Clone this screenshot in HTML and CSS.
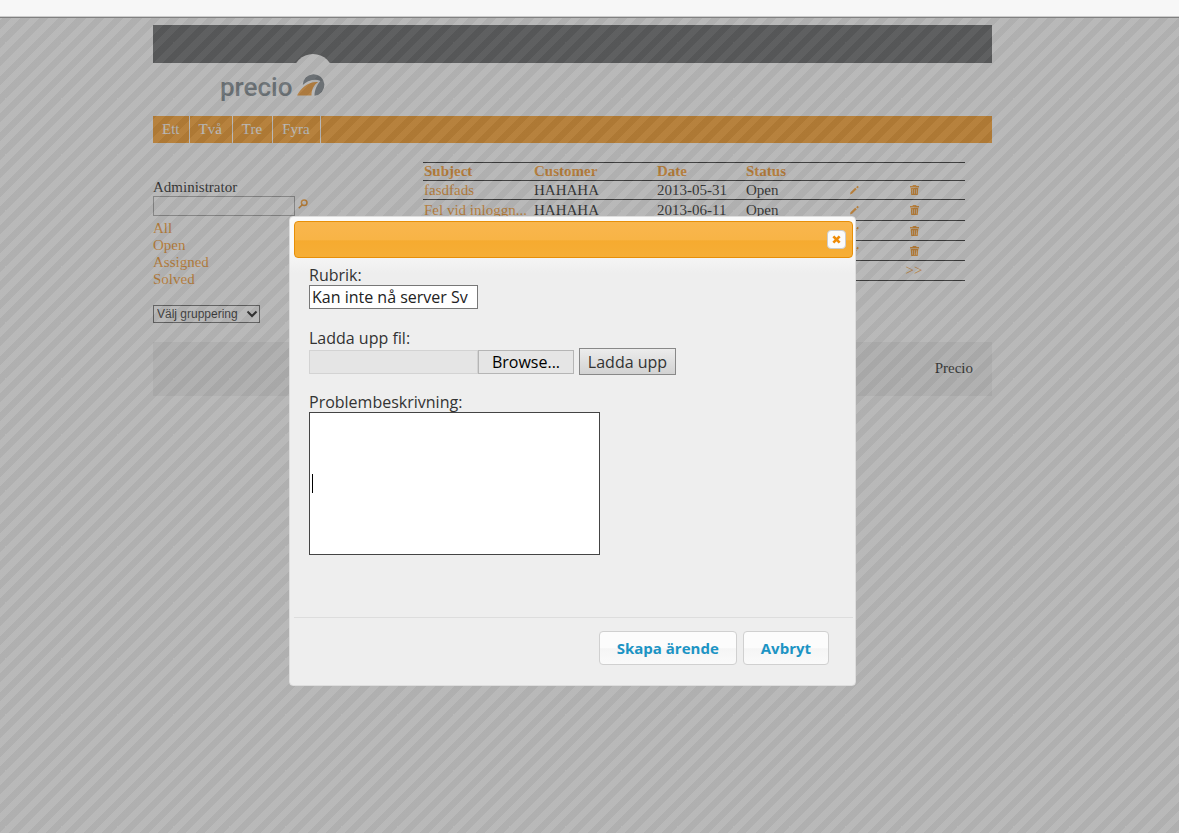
FILE: index.html
```html
<!DOCTYPE html>
<html lang="sv">
<head>
<meta charset="utf-8">
<title>Precio</title>
<link rel="stylesheet" href="styles.css">
</head>
<body>
<svg class="sprites" aria-hidden="true">
  <symbol id="pencil" viewBox="0 0 10 10"><path d="M0 10l.6-2.400 5.200-5 1.700 1.700-5.200 5zM6.800 1.900L8.400.3l1.500 1.500-1.600 1.600z"/></symbol>
  <symbol id="trash" viewBox="0 0 10 11"><path fill-rule="evenodd" d="M3 0h4v1h3v1.800H0V1h3zM.8 3.400h8.400L8.600 11H1.400zM2.700 4.600v5h.6v-5zM4.700 4.600v5h.6v-5zM6.700 4.600v5h.6v-5z"/></symbol>
</svg>
<div class="topbar"></div>
<div class="stage">
  <div class="page">
    <header class="header">
      <div class="band"></div>
      <svg class="logo" viewBox="0 0 120 62" role="img" aria-label="precio">
        <circle class="logo-bump" cx="97" cy="20" r="20"/>
        <text class="logo-text" x="4" y="42">precio</text>
        <path class="logo-disc" d="M86.800 31A10.800 10.800 0 1 1 98.500 41.700C98.500 36 101 30.500 104.500 27C98 24 91 27 86.800 31z"/>
        <path class="logo-sail" d="M81 41.500C85 34 92 27 102.300 28C97.500 31 95.500 36 95.500 41.500z"/>
      </svg>
    </header>
    <nav class="nav">
      <a href="#">Ett</a><a href="#">Två</a><a href="#">Tre</a><a href="#">Fyra</a>
    </nav>
    <main class="main">
      <aside class="side">
        <label for="search">Administrator</label>
        <div class="search">
          <input id="search" type="text">
          <button type="button" aria-label="Sök"><svg viewBox="0 0 10 10"><circle cx="6.200" cy="3.800" r="2.800"/><path d="M4 6L.8 9.200"/></svg></button>
        </div>
        <ul class="filters">
          <li><a href="#">All</a></li>
          <li><a href="#">Open</a></li>
          <li><a href="#">Assigned</a></li>
          <li><a href="#">Solved</a></li>
        </ul>
        <div class="group">
          <select aria-label="Gruppering"><option>Välj gruppering</option></select>
          <svg viewBox="0 0 12 8"><path d="M1.500 1.500L6 6l4.500-4.500"/></svg>
        </div>
      </aside>
      <table class="cases">
        <colgroup><col class="c1"><col class="c2"><col class="c3"><col class="c4"><col class="c5"><col class="c6"></colgroup>
        <thead>
          <tr><th>Subject</th><th>Customer</th><th>Date</th><th>Status</th><th></th><th></th></tr>
        </thead>
        <tbody>
          <tr><td><a href="#">fasdfads</a></td><td>HAHAHA</td><td>2013-05-31</td><td>Open</td><td class="act"><svg><use href="#pencil"/></svg></td><td class="act last"><svg><use href="#trash"/></svg></td></tr>
          <tr><td><a href="#">Fel vid inloggn...</a></td><td>HAHAHA</td><td>2013-06-11</td><td>Open</td><td class="act"><svg><use href="#pencil"/></svg></td><td class="act last"><svg><use href="#trash"/></svg></td></tr>
          <tr><td></td><td></td><td></td><td></td><td class="act"><svg><use href="#pencil"/></svg></td><td class="act last"><svg><use href="#trash"/></svg></td></tr>
          <tr><td></td><td></td><td></td><td></td><td class="act"><svg><use href="#pencil"/></svg></td><td class="act last"><svg><use href="#trash"/></svg></td></tr>
          <tr><td></td><td></td><td></td><td></td><td></td><td class="act last"><a href="#">&gt;&gt;</a></td></tr>
        </tbody>
      </table>
    </main>
    <footer class="footer">Precio</footer>
  </div>
  <div class="overlay">
    <form class="dialog" role="dialog" aria-label="Skapa ärende">
      <div class="titlebar">
        <button class="close" type="button" aria-label="Stäng"><svg viewBox="0 0 10 10"><path d="M1.500 1.500l7 7M8.500 1.500l-7 7"/></svg></button>
      </div>
      <div class="fields">
        <div class="field">
          <label for="subject">Rubrik:</label>
          <input class="text" id="subject" type="text" value="Kan inte nå server Sv">
        </div>
        <div class="field upload">
          <label for="file">Ladda upp fil:</label>
          <div class="file-row">
            <input class="file-name" id="file" type="text" readonly>
            <button class="browse" type="button">Browse...</button>
            <button class="send" type="button">Ladda upp</button>
          </div>
        </div>
        <div class="field">
          <label for="problem">Problembeskrivning:</label>
          <div class="area"><textarea id="problem"></textarea><span class="caret"></span></div>
        </div>
      </div>
      <div class="buttons">
        <button type="button">Skapa ärende</button>
        <button type="button">Avbryt</button>
      </div>
    </form>
  </div>
</div>
</body>
</html>
```
FILE: styles.css
```css
* { box-sizing: border-box; }
body {
  margin: 0;
  background: #fff;
  color: #000;
  font: 15px/17px "Liberation Serif", "Times New Roman", serif;
}
a { color: #f68b08; text-decoration: none; }
button, input, select, textarea { margin: 0; font: inherit; border-radius: 0; }
.sprites { position: absolute; width: 0; height: 0; }
.topbar {
  height: 18px;
  background: #f7f7f7;
  border-bottom: 1px solid #808080;
  box-shadow: inset 0 -1px #ccc;
}
.stage { position: relative; min-height: calc(100vh - 18px); padding: 7px 34px 0 0; }
.page { max-width: 839px; margin: 0 auto; }

.header { height: 91px; }
.band { height: 38px; background: #4b4c4e; }
.logo { display: block; width: 120px; height: 62px; margin: -9px 0 0 63px; }
.logo-bump { fill: #fff; }
.logo-text { font: 500 26px Roboto, sans-serif; fill: #6c7981; }
.logo-disc { fill: #656f77; }
.logo-sail { fill: #f6931d; }

.nav { display: flex; height: 27px; background: #fa9108; }
.nav a { padding: 5px 10px 5px 9px; color: #fff; border-right: 1px solid #fff; }
.nav a:first-child { padding-right: 9px; }

.main { display: flex; justify-content: space-between; padding: 19px 27px 0 0; height: 199px; }
.side { width: 170px; padding-top: 17px; }
.side label { display: block; }
.search { display: flex; gap: 3px; align-items: flex-start; margin-bottom: 4px; }
.search input { width: 142px; height: 20px; padding: 0 2px; border: 1px solid #999; background: transparent; }
.search button { padding: 0; margin-top: 3px; border: 0; background: none; }
.search svg { display: block; width: 10px; height: 10px; fill: none; stroke: #f68b08; stroke-width: 1.5; }
.filters { margin: 0 0 17px; padding: 0; list-style: none; }
.group { position: relative; width: 107px; }
.group select {
  display: block;
  width: 100%;
  height: 18px;
  padding: 0 3px;
  border: 1px solid #555;
  background: none;
  color: #111;
  appearance: none;
  font: 12px/14px "Liberation Sans", Arial, sans-serif;
}
.group svg { position: absolute; right: 2px; top: 5px; width: 12px; height: 8px; fill: none; stroke: #000; stroke-width: 2; pointer-events: none; }

.cases { width: 542px; table-layout: fixed; border-collapse: collapse; align-self: flex-start; }
.cases tr { height: 20px; border-top: 1px solid #111; border-bottom: 1px solid #111; }
.cases thead tr { height: 18px; }
.cases tbody tr:first-child { height: 19px; }
.cases tbody tr:nth-child(2) { height: 21px; }
.cases th, .cases td { padding: 0 1px; text-align: left; white-space: nowrap; }
.cases th { color: #f68b08; }
.cases .act { text-align: center; }
.cases .last { padding-right: 22px; }
.cases svg { display: block; width: 9px; height: 10px; margin: 0 auto; fill: #f68b08; }
.c1 { width: 110px; }
.c2 { width: 123px; }
.c3 { width: 89px; }
.c4 { width: 79px; }
.c5 { width: 60px; }
.c6 { width: 81px; }

.footer { padding: 18px 19px; height: 54px; background: #eee; text-align: right; }

.overlay {
  position: absolute;
  inset: 0;
  display: flex;
  justify-content: center;
  align-items: flex-start;
  padding: 198px 34px 0 0;
  background: repeating-linear-gradient(135deg, rgba(97, 97, 97, .5) 0 8.333%, rgba(115, 115, 115, .5) 8.333% 16.667%) 2px 0 / 56px 56px;
}
.dialog {
  width: 567px;
  padding: 4px 2px 20px 4px;
  border: 1px solid #ddd;
  border-radius: 4px;
  background: linear-gradient(#fafafa 0 30px, #eee 56px);
  color: #333;
  font: 16px/20px "Open Sans", "Trebuchet MS", sans-serif;
}
.titlebar {
  display: flex;
  align-items: center;
  justify-content: flex-end;
  height: 37px;
  padding: 0 6px;
  border: 1px solid #e78f08;
  border-radius: 4px;
  background: linear-gradient(#f9b64e, #f8b446 50%, #f6ab30 54%, #f6ae36);
}
.close { width: 19px; height: 19px; padding: 4px; border: 1px solid #ccc; border-radius: 4px; background: #fbfbfb; }
.close svg { display: block; width: 9px; height: 9px; stroke: #ef8c08; stroke-width: 3; }
.fields { height: 359px; padding: 7px 15px 0; }
.field { margin-bottom: 19px; }
.upload { margin-bottom: 17px; }
.field label { display: block; }
.field input, .area { display: block; }
.text { width: 169px; height: 24px; padding: 0 2px; border: 1px solid #777; background: #fff; color: #222; }
.file-row { display: flex; align-items: center; }
.file-name { width: 169px; height: 24px; border: 1px solid #d3d3d3; background: #e5e5e5; }
.browse { width: 96px; height: 24px; padding: 0; border: 1px solid #b5b5b5; background: #e5e5e5; color: #000; line-height: 20px; }
.send { width: 97px; height: 27px; margin-left: 5px; padding: 0; border: 1px solid #888; background: linear-gradient(#ececec, #d2d2d2); color: #333; }
.area { position: relative; width: 291px; }
.area textarea { display: block; width: 100%; height: 143px; border: 1px solid #444; background: #fff; resize: none; }
.caret { position: absolute; left: 3px; top: 62px; width: 1px; height: 19px; background: #000; }
.buttons {
  display: flex;
  justify-content: flex-end;
  gap: 6px;
  padding: 13px 24px 0 0;
  border-top: 1px solid #ddd;
}
.buttons button {
  height: 34px;
  padding: 0 17px;
  border: 1px solid #d0d0d0;
  border-radius: 4px;
  background: linear-gradient(#fcfcfc 50%, #f5f5f5 52%, #fafafa);
  color: #1c94c4;
  font-size: 15px;
  font-weight: 700;
}
```
